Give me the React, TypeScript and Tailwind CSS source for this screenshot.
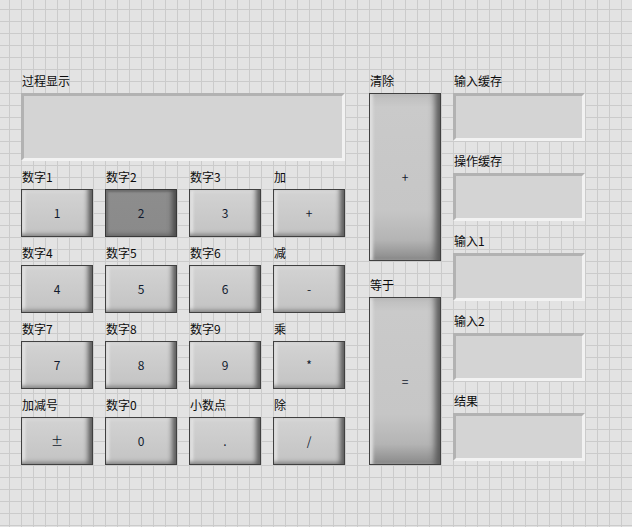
import React from 'react'

const keys = [
  [
    { label: '数字1', text: '1' },
    { label: '数字2', text: '2', pressed: true },
    { label: '数字3', text: '3' },
    { label: '加', text: '+' },
  ],
  [
    { label: '数字4', text: '4' },
    { label: '数字5', text: '5' },
    { label: '数字6', text: '6' },
    { label: '减', text: '-' },
  ],
  [
    { label: '数字7', text: '7' },
    { label: '数字8', text: '8' },
    { label: '数字9', text: '9' },
    { label: '乘', text: '*' },
  ],
  [
    { label: '加减号', text: '±' },
    { label: '数字0', text: '0' },
    { label: '小数点', text: '.' },
    { label: '除', text: '/', pad: true },
  ],
]

const buffers = ['输入缓存', '操作缓存', '输入1', '输入2', '结果']

function Label({ children, className = '' }: { children: React.ReactNode; className?: string }) {
  return <div className={`h-[20px] pl-px text-[12px] leading-[16px] text-[#0c0c0c] whitespace-nowrap ${className}`}>{children}</div>
}

function Key({ text, pressed }: { text: string; pressed?: boolean }) {
  return (
    <div
      className={
        pressed
          ? 'h-[48px] w-[72px] border border-[#383838] bg-[linear-gradient(#8d8d8d,#8a8a8a)] shadow-[inset_-7px_0_5px_-3px_#4e4e4e,inset_0_-4px_4px_-2px_#6a6a6a,inset_3px_0_2px_-1px_#727272,inset_0_3px_2px_-1px_#6f6f6f] flex items-center justify-center text-[12px] text-[#111a2e]'
          : 'h-[48px] w-[72px] border border-[#404040] bg-[linear-gradient(#d3d3d3,#c3c3c3)] shadow-[inset_-7px_0_5px_-3px_#5e5e5e,inset_0_-4px_4px_-2px_#878787,inset_4px_0_3px_-1px_#e6e6e6,inset_0_3px_3px_-1px_#dcdcdc] flex items-center justify-center text-[12px] text-[#111a2e]'
      }
    >
      {text}
    </div>
  )
}

function TallKey({ text }: { text: string }) {
  return (
    <div className="h-[168px] w-[72px] border border-[#404040] bg-[linear-gradient(#bdbdbd_0%,#cacaca_8%,#c6c6c6_70%,#b4b4b4_88%,#8a8a8a_100%)] shadow-[inset_-9px_0_6px_-4px_#5a5a5a,inset_4px_0_3px_-1px_#dedede] flex items-center justify-center text-[12px] text-[#111a2e]">
      {text}
    </div>
  )
}

function Box({ className = '' }: { className?: string }) {
  return (
    <div className={`border-[3px] border-t-[#b2b2b2] border-l-[#b2b2b2] border-r-[#f2f2f2] border-b-[#f2f2f2] bg-[#d4d4d4] ${className}`} />
  )
}

export default function App() {
  return (
    <div className="w-[632px] h-[527px] overflow-hidden bg-[#e3e3e3] bg-[linear-gradient(to_right,#cbcbcb_1px,transparent_1px),linear-gradient(to_bottom,#cbcbcb_1px,transparent_1px)] bg-size-[12px_12px] bg-position-[9px_9px] font-['Noto_Sans_CJK_SC','Microsoft_YaHei',sans-serif]">
      <div className="flex pt-[73px] pl-[21px]">
        {/* Left: display + keypad */}
        <div className="w-[324px] flex flex-col">
          <Label>过程显示</Label>
          <Box className="h-[68px]" />
          <div className="mt-[8px] flex flex-col gap-[8px]">
            {keys.map((row, i) => (
              <div key={i} className="grid grid-cols-4 gap-x-[12px]">
                {row.map(k => (
                  <div key={k.label}>
                    <Label className={k.pad ? 'pl-[4px]' : ''}>{k.label}</Label>
                    <Key text={k.text} pressed={k.pressed} />
                  </div>
                ))}
              </div>
            ))}
          </div>
        </div>

        {/* Middle: clear / equals */}
        <div className="ml-[24px] w-[72px] flex flex-col">
          <Label>清除</Label>
          <TallKey text="+" />
          <Label className="mt-[16px]">等于</Label>
          <TallKey text="=" />
        </div>

        {/* Right: buffers */}
        <div className="ml-[12px] w-[132px] flex flex-col gap-[12px]">
          {buffers.map(b => (
            <div key={b}>
              <Label>{b}</Label>
              <Box className="h-[48px]" />
            </div>
          ))}
        </div>
      </div>
    </div>
  )
}
